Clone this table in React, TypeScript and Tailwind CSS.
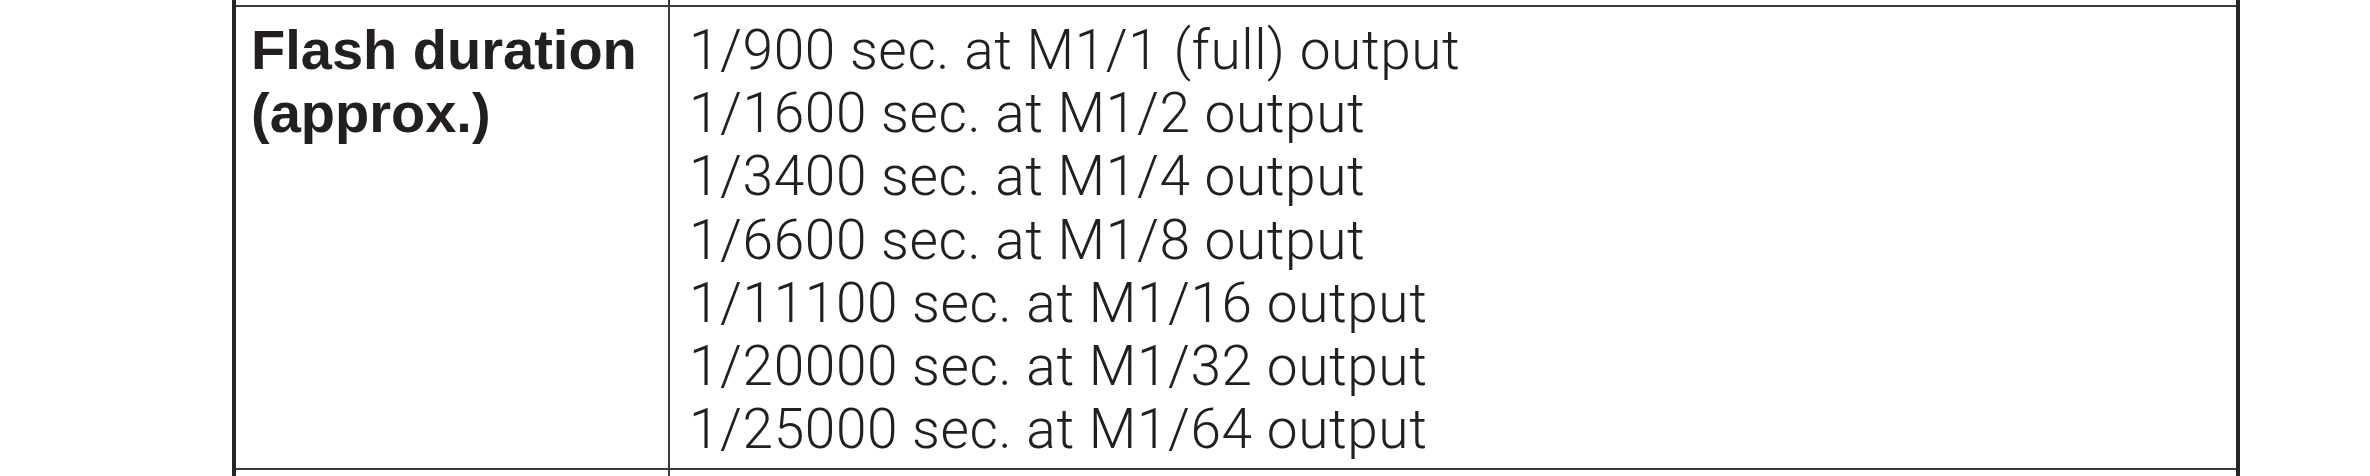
const durations = [
  '1/900 sec. at M1/1 (full) output',
  '1/1600 sec. at M1/2 output',
  '1/3400 sec. at M1/4 output',
  '1/6600 sec. at M1/8 output',
  '1/11100 sec. at M1/16 output',
  '1/20000 sec. at M1/32 output',
  '1/25000 sec. at M1/64 output',
]

export default function App() {
  return (
    <div className="w-[2370px] h-[476px] overflow-hidden bg-white pl-[232px] text-[#231f20]">
      <div className="w-[2008px] h-full flex flex-col border-x-4 border-[#262626]">
        {/* stub of the row above */}
        <div className="h-[5px] flex">
          <div className="w-[434px] border-r-2 border-[#3a3a3a]" />
        </div>

        <div className="h-[465px] flex border-y-2 border-[#3a3a3a]">
          <div className="w-[434px] border-r-2 border-[#3a3a3a] pl-[15px] pt-[11px] font-['Liberation_Sans',Arial,sans-serif] font-bold text-[56px] leading-[63.2px]">
            Flash duration
            <br />
            (approx.)
          </div>
          <div className="flex-1 pl-[19px] pt-[12px] font-['Roboto','Liberation_Sans',sans-serif] font-light text-[55px] leading-[63.2px] tracking-[0.6px]">
            {durations.map((line) => (
              <div key={line}>{line}</div>
            ))}
          </div>
        </div>

        {/* stub of the row below */}
        <div className="flex-1 flex">
          <div className="w-[434px] border-r-2 border-[#3a3a3a]" />
        </div>
      </div>
    </div>
  )
}
